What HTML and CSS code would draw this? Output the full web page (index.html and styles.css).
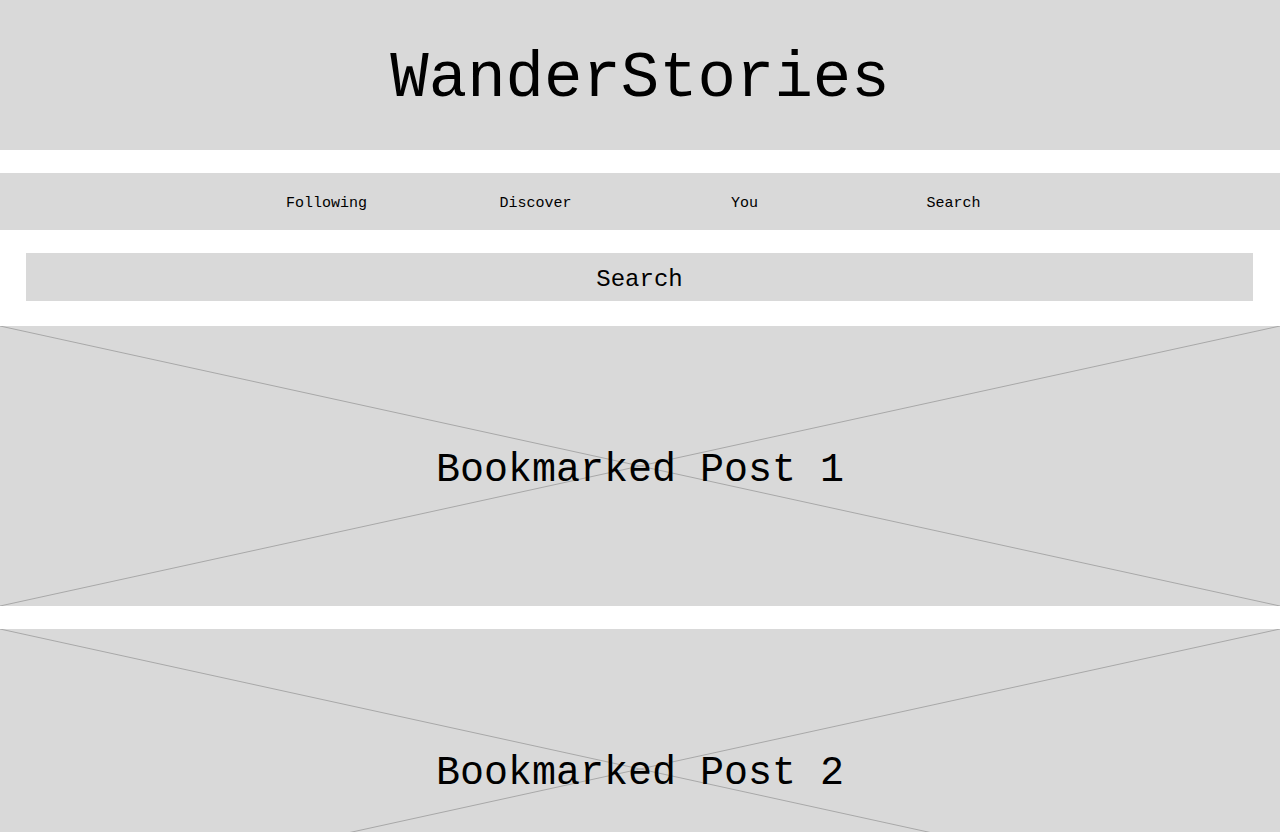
FILE: index.html
```html
<!DOCTYPE html>
<html lang="en">
<head>
<meta charset="utf-8">
<title>WanderStories</title>
<link rel="stylesheet" href="styles.css">
</head>
<body>
<div class="page">
  <header class="masthead">
    <h1 class="title">WanderStories</h1>
  </header>
  <nav class="nav">
    <div class="nav-inner">
      <a class="nav-item" href="#">Following</a>
      <a class="nav-item" href="#">Discover</a>
      <a class="nav-item" href="#">You</a>
      <a class="nav-item" href="#">Search</a>
    </div>
  </nav>
  <div class="search-wrap">
    <div class="search">Search</div>
  </div>
  <section class="post">
    <svg class="cross" viewBox="0 0 100 100" preserveAspectRatio="none" aria-hidden="true">
      <line x1="0" y1="0" x2="100" y2="100" vector-effect="non-scaling-stroke"/>
      <line x1="100" y1="0" x2="0" y2="100" vector-effect="non-scaling-stroke"/>
    </svg>
    <h2 class="post-title">Bookmarked Post 1</h2>
  </section>
  <section class="post">
    <svg class="cross" viewBox="0 0 100 100" preserveAspectRatio="none" aria-hidden="true">
      <line x1="0" y1="0" x2="100" y2="100" vector-effect="non-scaling-stroke"/>
      <line x1="100" y1="0" x2="0" y2="100" vector-effect="non-scaling-stroke"/>
    </svg>
    <h2 class="post-title">Bookmarked Post 2</h2>
  </section>
</div>
</body>
</html>
```
FILE: styles.css
```css
* { box-sizing: border-box; }
html, body { margin: 0; padding: 0; background: #ffffff; }
body {
  font-family: "Liberation Mono", "DejaVu Sans Mono", monospace;
  color: #000000;
}
.page {
  display: flex;
  flex-direction: column;
  gap: 23px;
}
.masthead {
  height: 150px;
  padding-top: 8px;
  background: #d9d9d9;
  display: flex;
  align-items: center;
  justify-content: center;
}
.title {
  margin: 0;
  font-size: 64px;
  font-weight: 400;
  line-height: 1;
}
.nav {
  height: 57px;
  padding-top: 4px;
  background: #d9d9d9;
  display: flex;
  justify-content: center;
}
.nav-inner {
  width: 836px;
  display: grid;
  grid-template-columns: repeat(4, 1fr);
  align-items: center;
}
.nav-item {
  text-align: center;
  font-size: 15px;
  color: #000000;
  text-decoration: none;
}
.search-wrap {
  padding: 0 27px 2px 26px;
}
.search {
  height: 48px;
  padding-top: 4px;
  background: #d9d9d9;
  display: flex;
  align-items: center;
  justify-content: center;
  font-size: 24px;
}
.post {
  position: relative;
  height: 280px;
  padding-top: 10px;
  background: #d9d9d9;
  display: flex;
  align-items: center;
  justify-content: center;
  overflow: hidden;
}
.cross {
  position: absolute;
  inset: 0;
  width: 100%;
  height: 100%;
}
.cross line {
  stroke: #a8a8a8;
  stroke-width: 1;
}
.post-title {
  position: relative;
  margin: 0;
  font-size: 40px;
  font-weight: 400;
  line-height: 1;
}
```
